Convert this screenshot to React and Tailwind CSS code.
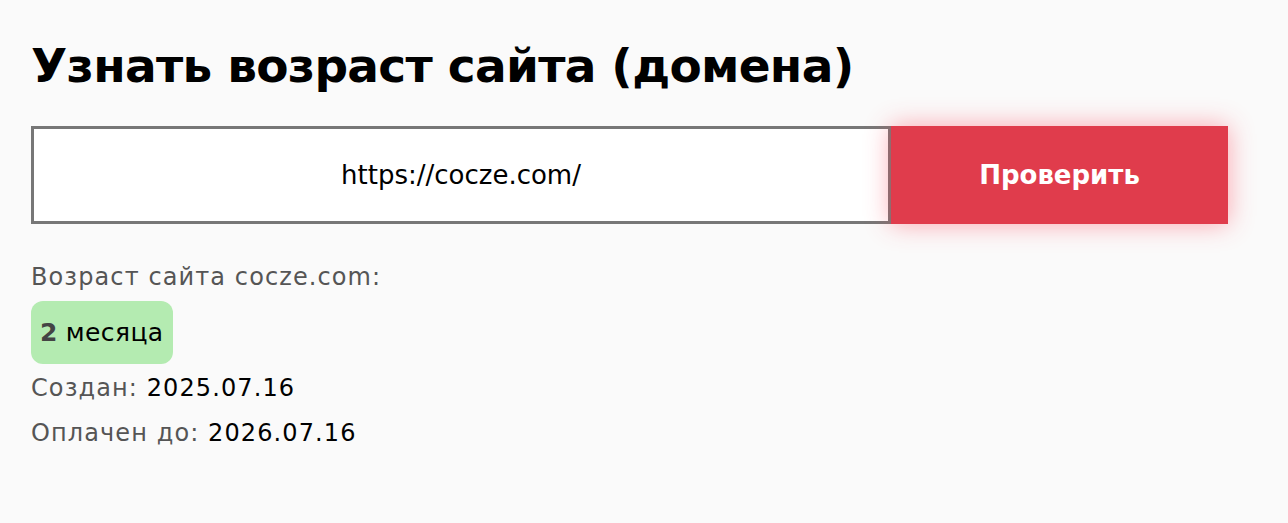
export default function App() {
  return (
    <div className="min-h-[523px] bg-[#fafafa] px-[31px] pt-[30px] font-['DejaVu_Sans',sans-serif]">
      <h1 className="text-[47px] font-bold leading-[72px] text-black tracking-[-0.7px]">
        Узнать возраст сайта (домена)
      </h1>
      <form className="mt-[24px] flex w-[1197px]" onSubmit={(e) => e.preventDefault()}>
        <input
          type="text"
          defaultValue="https://cocze.com/"
          className="h-[98px] w-[860px] border-[3px] border-[#777777] bg-white text-center text-[26px] text-black outline-none"
        />
        <button
          type="submit"
          className="h-[98px] w-[337px] bg-[#e03c4c] text-[26px] font-bold text-white shadow-[0_0_24px_rgba(255,60,80,0.45)]"
        >
          Проверить
        </button>
      </form>
      <div className="mt-[38px] text-[24px] leading-[30px] tracking-[1.1px] text-[#555555]">
        <p>Возраст сайта cocze.com:</p>
        <div className="mt-[9px] inline-flex h-[63px] items-center rounded-[12px] bg-[#b4ebb1] px-[9px] text-[25px] tracking-[0.4px] text-black">
          <b className="mr-[8px] text-[#444444]">2</b>месяца
        </div>
        <p className="mt-[9px]">
          Создан: <span className="text-black">2025.07.16</span>
        </p>
        <p className="mt-[15px]">
          Оплачен до: <span className="text-black">2026.07.16</span>
        </p>
      </div>
    </div>
  );
}
